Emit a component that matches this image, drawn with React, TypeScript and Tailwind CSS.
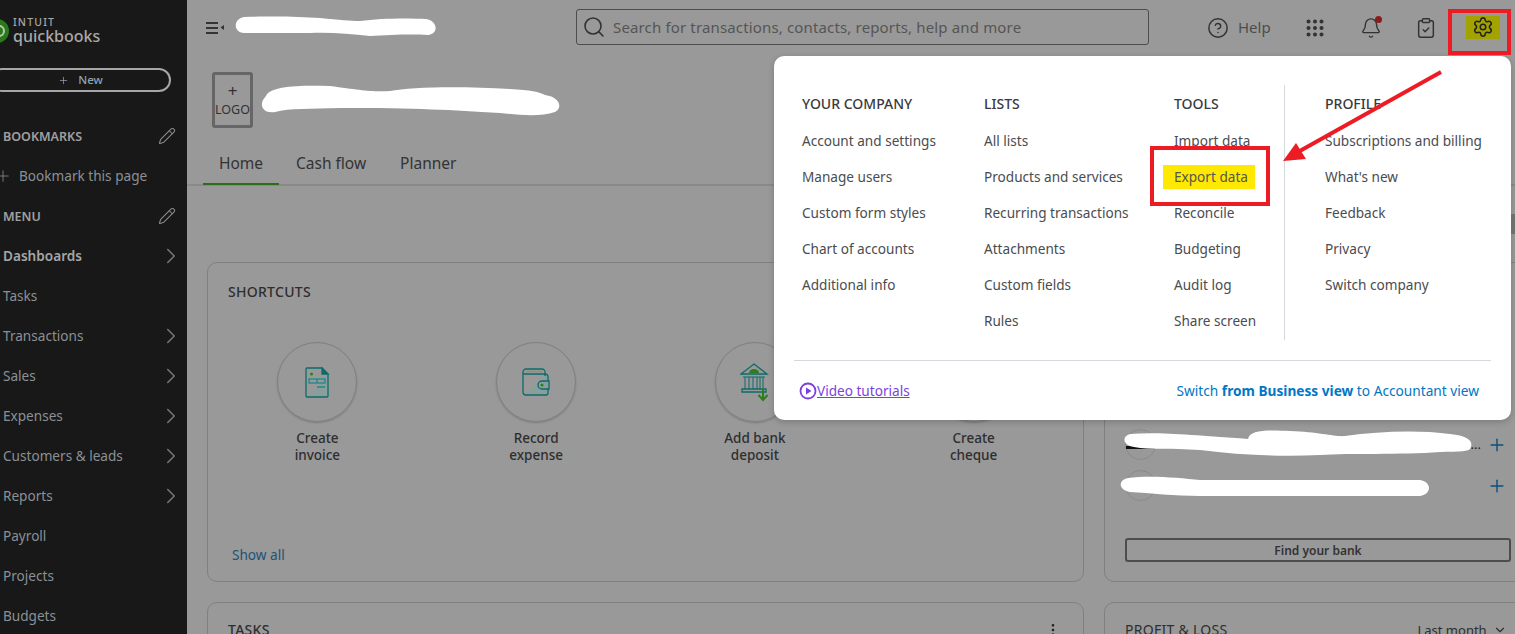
import React from "react";
import { Search, CircleHelp, Bell, ClipboardCheck, Settings, Pencil, ChevronRight, ChevronDown, Plus, EllipsisVertical } from "lucide-react";

const font = "font-['Noto_Sans','Open_Sans',sans-serif]";

function SideRow({ label, chevron, bold }: { label: string; chevron?: boolean; bold?: boolean }) {
  return (
    <div className="h-10 flex items-center justify-between pl-[3px] pr-[3px]">
      <span className={bold ? "text-[13.6px] font-semibold text-[#a6a6a6]" : "text-[13.6px] text-[#8b9095]"}>{label}</span>
      {chevron && <ChevronRight size={26} strokeWidth={1.4} className="text-[#777]" />}
    </div>
  );
}

function SideHead({ label }: { label: string }) {
  return (
    <div className="h-10 flex items-center justify-between pl-[3px] pr-[11px]">
      <span className="mt-[2px] text-[12.5px] font-semibold text-[#a0a0a0]">{label}</span>
      <Pencil size={18} strokeWidth={1.4} className="text-[#8c8c8c]" />
    </div>
  );
}

function Sidebar() {
  return (
    <aside className="w-[187px] shrink-0 h-full bg-[#181818] overflow-hidden">
      <div className="h-[68px] relative">
        <svg width="12" height="28" viewBox="0 0 12 28" className="absolute left-0 top-[17px]">
          <circle cx="-3" cy="14" r="12" fill="#2a7a1a" />
          <circle cx="-1" cy="14" r="5" fill="none" stroke="#b8c9b0" strokeWidth="2" />
        </svg>
        <div className="absolute left-[13px] top-[16px] text-[#a8a8a8]">
          <div className="text-[10.5px] leading-[13px] font-medium tracking-[0.11em]">INTUIT</div>
          <div className="text-[16px] leading-[14px] font-medium">quickbooks</div>
        </div>
      </div>
      <div className="h-[24px] w-[181px] -ml-[10px] mr-[16px] border-2 border-[#a6a6a6] rounded-full flex items-center justify-center gap-[9px] text-[11.5px] font-medium text-[#8fa3b3]">
        <Plus size={11} strokeWidth={1.6} />
        <span>New</span>
      </div>
      <div className="h-[24px]" />
      <SideHead label="BOOKMARKS" />
      <div className="h-10 flex items-center -ml-[6px] gap-[7px] text-[13.6px] text-[#8b9095]">
        <Plus size={18} strokeWidth={1.4} className="text-[#777]" />
        <span>Bookmark this page</span>
      </div>
      <SideHead label="MENU" />
      <SideRow label="Dashboards" chevron bold />
      <SideRow label="Tasks" />
      <SideRow label="Transactions" chevron />
      <SideRow label="Sales" chevron />
      <SideRow label="Expenses" chevron />
      <SideRow label="Customers & leads" chevron />
      <SideRow label="Reports" chevron />
      <SideRow label="Payroll" />
      <SideRow label="Projects" />
      <SideRow label="Budgets" />
    </aside>
  );
}

function Dots() {
  const c = [0, 1, 2];
  return (
    <svg width="18" height="18" viewBox="0 0 18 18" fill="#333">
      {c.map((y) => c.map((x) => <circle key={`${x}${y}`} cx={2.5 + x * 6.5} cy={2.5 + y * 6.5} r="2" />))}
    </svg>
  );
}

function TopBar() {
  return (
    <header className="h-14 flex items-center">
      <svg width="20" height="14" viewBox="0 0 20 14" className="ml-[19px]" fill="#333">
        <rect x="0" y="1" width="12" height="2" />
        <rect x="0" y="6" width="12" height="2" />
        <rect x="0" y="11" width="12" height="2" />
        <path d="M18 4v5l-3.500-2.500z" />
      </svg>
      <div className="w-[350px]" />
      <div className="w-[573px] h-[36px] -mt-[2px] border border-[#4d4d4d] rounded-[3px] flex items-center pl-[5px] gap-[7px]">
        <Search size={24} strokeWidth={1.6} className="text-[#333]" />
        <span className="text-[15px] text-[#555] tracking-[0.01em]">Search for transactions, contacts, reports, help and more</span>
      </div>
      <div className="flex items-center ml-[58px] gap-[9px] -mt-[1px]">
        <CircleHelp size={22} strokeWidth={1.6} className="text-[#333]" />
        <span className="text-[15px] text-[#4d4d4d]">Help</span>
      </div>
      <div className="ml-[35px]"><Dots /></div>
      <div className="relative ml-[36px]">
        <Bell size={22} strokeWidth={1.5} className="text-[#333]" />
        <span className="absolute -top-[1px] right-0 w-[7px] h-[7px] rounded-full bg-[#8a1c1c]" />
      </div>
      <ClipboardCheck size={22} strokeWidth={1.6} className="text-[#333] ml-[33px]" />
      <div className="ml-[29px] -mt-[2px] w-[34px] h-[23px] bg-[#a3a300] flex items-center justify-center">
        <Settings size={22} strokeWidth={1.7} className="text-[#222]" />
      </div>
    </header>
  );
}

function CompanyHead() {
  return (
    <div className="pl-[25px] pt-[16px] h-[72px]">
      <div className="w-[41px] h-[56px] border-[3px] border-[#666] rounded-[3px] flex flex-col items-center justify-center text-[#333]">
        <span className="text-[17px] leading-[20px]">+</span>
        <span className="text-[12.5px] leading-[18px]">LOGO</span>
      </div>
    </div>
  );
}

function Tabs() {
  return (
    <div className="mt-[16px] h-[42px] pl-[16px] flex items-start border-b-2 border-[#8a8a8a] text-[15.5px] text-[#333]">
      <div className="w-[76px] h-[41px] flex items-center justify-center border-b-2 border-[#2a6e1a]">Home</div>
      <div className="ml-[17px] h-[40px] flex items-center">Cash flow</div>
      <div className="ml-[34px] h-[40px] flex items-center">Planner</div>
    </div>
  );
}

function InvoiceIcon() {
  return (
    <svg width="26" height="32" viewBox="0 0 26 32" fill="none" stroke="#0d6b6b" strokeWidth="1.3">
      <path d="M3 31 L23 10 V30 a1 1 0 0 1 -1 1 Z" fill="#8a9f9c" stroke="none" />
      <path d="M3 2 H18 L24 8 V30 a1 1 0 0 1 -1 1 H3 a1 1 0 0 1 -1 -1 V3 a1 1 0 0 1 1 -1 Z" />
      <path d="M18 2 L24 8 H18 Z" fill="#0d6b6b" />
      <circle cx="7.500" cy="8" r="1.500" fill="#2f7d1c" stroke="none" />
      <rect x="5" y="13" width="16" height="4" stroke="#1d8a8a" />
      <path d="M13 13v4M13 21h8" stroke="#1d8a8a" />
    </svg>
  );
}

function WalletIcon() {
  return (
    <svg width="30" height="30" viewBox="0 0 30 30" fill="none" stroke="#0d6b6b" strokeWidth="1.3">
      <path d="M2 28 L26 8 V27 a1 1 0 0 1 -1 1 Z" fill="#8a9f9c" stroke="none" />
      <path d="M24 9 V5 a3 3 0 0 0 -3 -3 H5 a3 3 0 0 0 -3 3 V25 a3 3 0 0 0 3 3 H25 a2 2 0 0 0 2 -2 V22 M2 7 H24 a3 3 0 0 1 3 3 V14" />
      <path d="M5 4.500H21" stroke="#7d9c60" />
      <path d="M28 14 H21 a4 4 0 0 0 0 8 H28 Z" />
      <circle cx="21" cy="18" r="1.500" fill="#2f7d1c" stroke="none" />
    </svg>
  );
}

function BankIcon() {
  return (
    <svg width="30" height="40" viewBox="0 0 30 40" fill="none" stroke="#0d6b6b" strokeWidth="1.3">
      <path d="M1 12 L14 2 L27 12 Z" />
      <path d="M9 11 a5 4 0 0 1 10 0 Z" fill="#2f7d1c" stroke="none" />
      <path d="M3 15 H25 M5 15 V27 M23 15 V27 M9 15 V27 M13 15 V27 M17 15 V27 M20 15 V27" strokeWidth="1" />
      <path d="M2 27 H26 V30 H2 Z" />
      <path d="M23 26 V38 M18.500 33 L23 38 L27.500 33" stroke="#2f7d1c" strokeWidth="2" />
    </svg>
  );
}

function Shortcut({ l1, l2, icon }: { l1: string; l2: string; icon?: React.ReactNode }) {
  return (
    <div className="flex flex-col items-center">
      <div className="w-[80px] h-[80px] rounded-full border border-[#7f7f7f] shadow-[0_1px_2px_rgba(0,0,0,0.2)] flex items-center justify-center">{icon}</div>
      <div className="mt-[8px] text-center text-[13.500px] leading-[17px] font-medium text-[#2e2e2e]">
        {l1}
        <br />
        {l2}
      </div>
    </div>
  );
}

function LeftColumn() {
  return (
    <div className="w-[877px] shrink-0 flex flex-col gap-[20px]">
      <section className="h-[320px] border border-[#808080] rounded-[10px] flex flex-col">
        <h2 className="pl-[20px] pt-[19px] text-[14px] leading-[20px] font-medium text-[#2e2e2e] tracking-[0.02em]">SHORTCUTS</h2>
        <div className="mt-[40px] grid grid-cols-4">
          <Shortcut l1="Create" l2="invoice" icon={<InvoiceIcon />} />
          <Shortcut l1="Record" l2="expense" icon={<WalletIcon />} />
          <Shortcut l1="Add bank" l2="deposit" icon={<BankIcon />} />
          <Shortcut l1="Create" l2="cheque" />
        </div>
        <div className="mt-auto pl-[24px] pb-[16px] text-[13.6px] leading-[20px] text-[#1c5478]">Show all</div>
      </section>
      <section className="h-[100px] border border-[#808080] rounded-[10px] pl-[20px] pr-[22px] pt-[17px] flex justify-between items-start">
        <h2 className="text-[14px] leading-[20px] font-medium text-[#2e2e2e] tracking-[0.02em]">TASKS</h2>
        <EllipsisVertical size={16} className="text-[#222] mt-[2px]" />
      </section>
    </div>
  );
}

function BankRow({ dots }: { dots?: boolean }) {
  return (
    <div className="h-[41px] flex items-center">
      <div className="w-[31px] h-[31px] rounded-full border border-[#8a8a8a] flex items-center justify-center">
        {dots && <div className="w-[29px] h-[3px] bg-[#111] mt-[6px]" />}
      </div>
      <div className="flex-1 text-right pr-[6px] text-[13px] text-[#222]">{dots ? "..." : ""}</div>
      <Plus size={20} strokeWidth={1.7} className="text-[#0d4f7c]" />
    </div>
  );
}

function RightColumn() {
  return (
    <div className="w-[430px] shrink-0 flex flex-col gap-[20px]">
      <section className="h-[320px] border border-[#808080] rounded-[10px] pl-[20px] flex flex-col justify-end pb-[19px]">
        <div className="w-[382px]">
          <BankRow dots />
          <BankRow />
        </div>
        <div className="h-[32px]" />
        <div className="w-[386px] h-[24px] pt-[2px] border-2 border-[#4d4d4d] rounded-[3px] flex items-center justify-center text-[12px] font-semibold text-[#333]">Find your bank</div>
      </section>
      <section className="h-[100px] border border-[#808080] rounded-[10px] pl-[20px] pt-[17px] flex items-start text-[14px] leading-[20px] text-[#2e2e2e]">
        <h2 className="tracking-[0.02em]">PROFIT & LOSS</h2>
        <div className="ml-[190px] flex items-center gap-[6px] text-[13px]">
          <span>Last month</span>
          <ChevronDown size={14} />
        </div>
      </section>
    </div>
  );
}

function MenuCol({ w, head, items, highlight }: { w: string; head: string; items: string[]; highlight?: string }) {
  return (
    <div className={w}>
      <div className="h-[37px] flex items-center text-[14px] font-medium text-[#393a3d]">{head}</div>
      {items.map((i) => (
        <div key={i} className={i === highlight ? "h-9 pt-[2px] flex items-center text-[13.6px] text-[#555] relative" : "h-9 pt-[2px] flex items-center text-[13.6px] text-[#4a4c50]"}>
          {i === highlight && <span className="absolute left-[-11px] top-[7px] w-[92px] h-[24px] bg-[#ffe900]" />}
          <span className="relative">{i}</span>
        </div>
      ))}
    </div>
  );
}

function SettingsMenu() {
  return (
    <div className="absolute left-[774px] top-[56px] w-[737px] h-[364px] bg-white rounded-[10px] shadow-[0_2px_6px_rgba(0,0,0,0.2)] flex flex-col">
      <div className="flex pl-[28px] pt-[29px] h-[284px]">
        <MenuCol w="w-[182px]" head="YOUR COMPANY" items={["Account and settings", "Manage users", "Custom form styles", "Chart of accounts", "Additional info"]} />
        <MenuCol w="w-[190px]" head="LISTS" items={["All lists", "Products and services", "Recurring transactions", "Attachments", "Custom fields", "Rules"]} />
        <MenuCol w="w-[110px]" head="TOOLS" highlight="Export data" items={["Import data", "Export data", "Reconcile", "Budgeting", "Audit log", "Share screen"]} />
        <div className="w-px h-[255px] bg-[#d4d7dc] mr-[40px]" />
        <MenuCol w="w-[170px]" head="PROFILE" items={["Subscriptions and billing", "What's new", "Feedback", "Privacy", "Switch company"]} />
      </div>
      <div className="mx-[20px] mt-[20px] pt-[2px] border-t border-[#d4d7dc] h-[60px] flex items-center justify-between pl-[5px] pr-[12px]">
        <div className="flex items-center text-[13.6px] text-[#7c3fe0]">
          <svg width="18" height="18" viewBox="0 0 18 18" fill="none" stroke="#7c3fe0" strokeWidth="1.800">
            <circle cx="9" cy="9" r="7.500" />
            <path d="M7 5.500v7l5.500-3.500z" fill="#7c3fe0" stroke="none" />
          </svg>
          <span className="underline">Video tutorials</span>
        </div>
        <div className="text-[13.7px] text-[#0077c5]">
          Switch <b className="font-bold">from Business view</b> to Accountant view
        </div>
      </div>
    </div>
  );
}

function Annotations() {
  return (
    <svg className="absolute left-0 top-0 pointer-events-none" width="1515" height="634" viewBox="0 0 1515 634" fill="none">
      <g fill="#fff">
        <path d="M244 17 C280 16 300 17 320 18 C340 20 350 21 360 21 C380 18 410 18 426 19 C438 21 439 34 428 35 C410 34 390 35 370 36 C350 34 330 32 310 33 C285 33 260 33 244 33 C233 32 233 19 244 17 Z" />
        <path d="M266 96 C270 86 300 85 330 86 C360 90 370 92 390 91 C410 87 460 86 510 89 C530 90 540 92 545 95 C560 97 563 108 555 112 C540 117 520 115 500 113 C450 110 420 108 340 108 C310 109 290 108 275 112 C262 114 258 104 266 96 Z" />
        <path d="M1130 434 C1160 432 1190 435 1248 439 C1250 430 1265 430 1290 431 C1320 432 1335 437 1345 436 C1380 431 1420 430 1450 434 C1470 436 1474 442 1470 449 C1465 453 1450 451 1440 452 C1400 455 1350 453 1320 455 C1280 457 1240 455 1200 450 C1170 448 1150 450 1134 447 C1122 445 1122 436 1130 434 Z" />
        <path d="M1128 478 C1150 475 1180 478 1200 480 L1420 480 C1432 482 1432 494 1420 496 C1380 496 1300 496 1200 496 C1175 496 1150 493 1130 492 C1118 490 1118 480 1128 478 Z" />
      </g>
      <path d="M1511 214 H1515 V234 H1511 Z" fill="#6f6f6f" />
      <g stroke="#ed1c24" strokeWidth="4">
        <rect x="1450" y="11" width="59" height="42" />
        <rect x="1152" y="148" width="116" height="56" />
        <path d="M1441 72 L1298 152" />
      </g>
      <path d="M1283 161 L1296 143 L1306 159 Z" fill="#ed1c24" />
    </svg>
  );
}

export default function App() {
  return (
    <div className={`relative w-[1515px] h-[634px] overflow-hidden flex bg-[#999999] ${font}`}>
      <Sidebar />
      <main className="flex-1 min-w-0">
        <TopBar />
        <CompanyHead />
        <Tabs />
        <div className="mt-[76px] pl-[20px] flex gap-[20px]">
          <LeftColumn />
          <RightColumn />
        </div>
      </main>
      <SettingsMenu />
      <Annotations />
    </div>
  );
}
